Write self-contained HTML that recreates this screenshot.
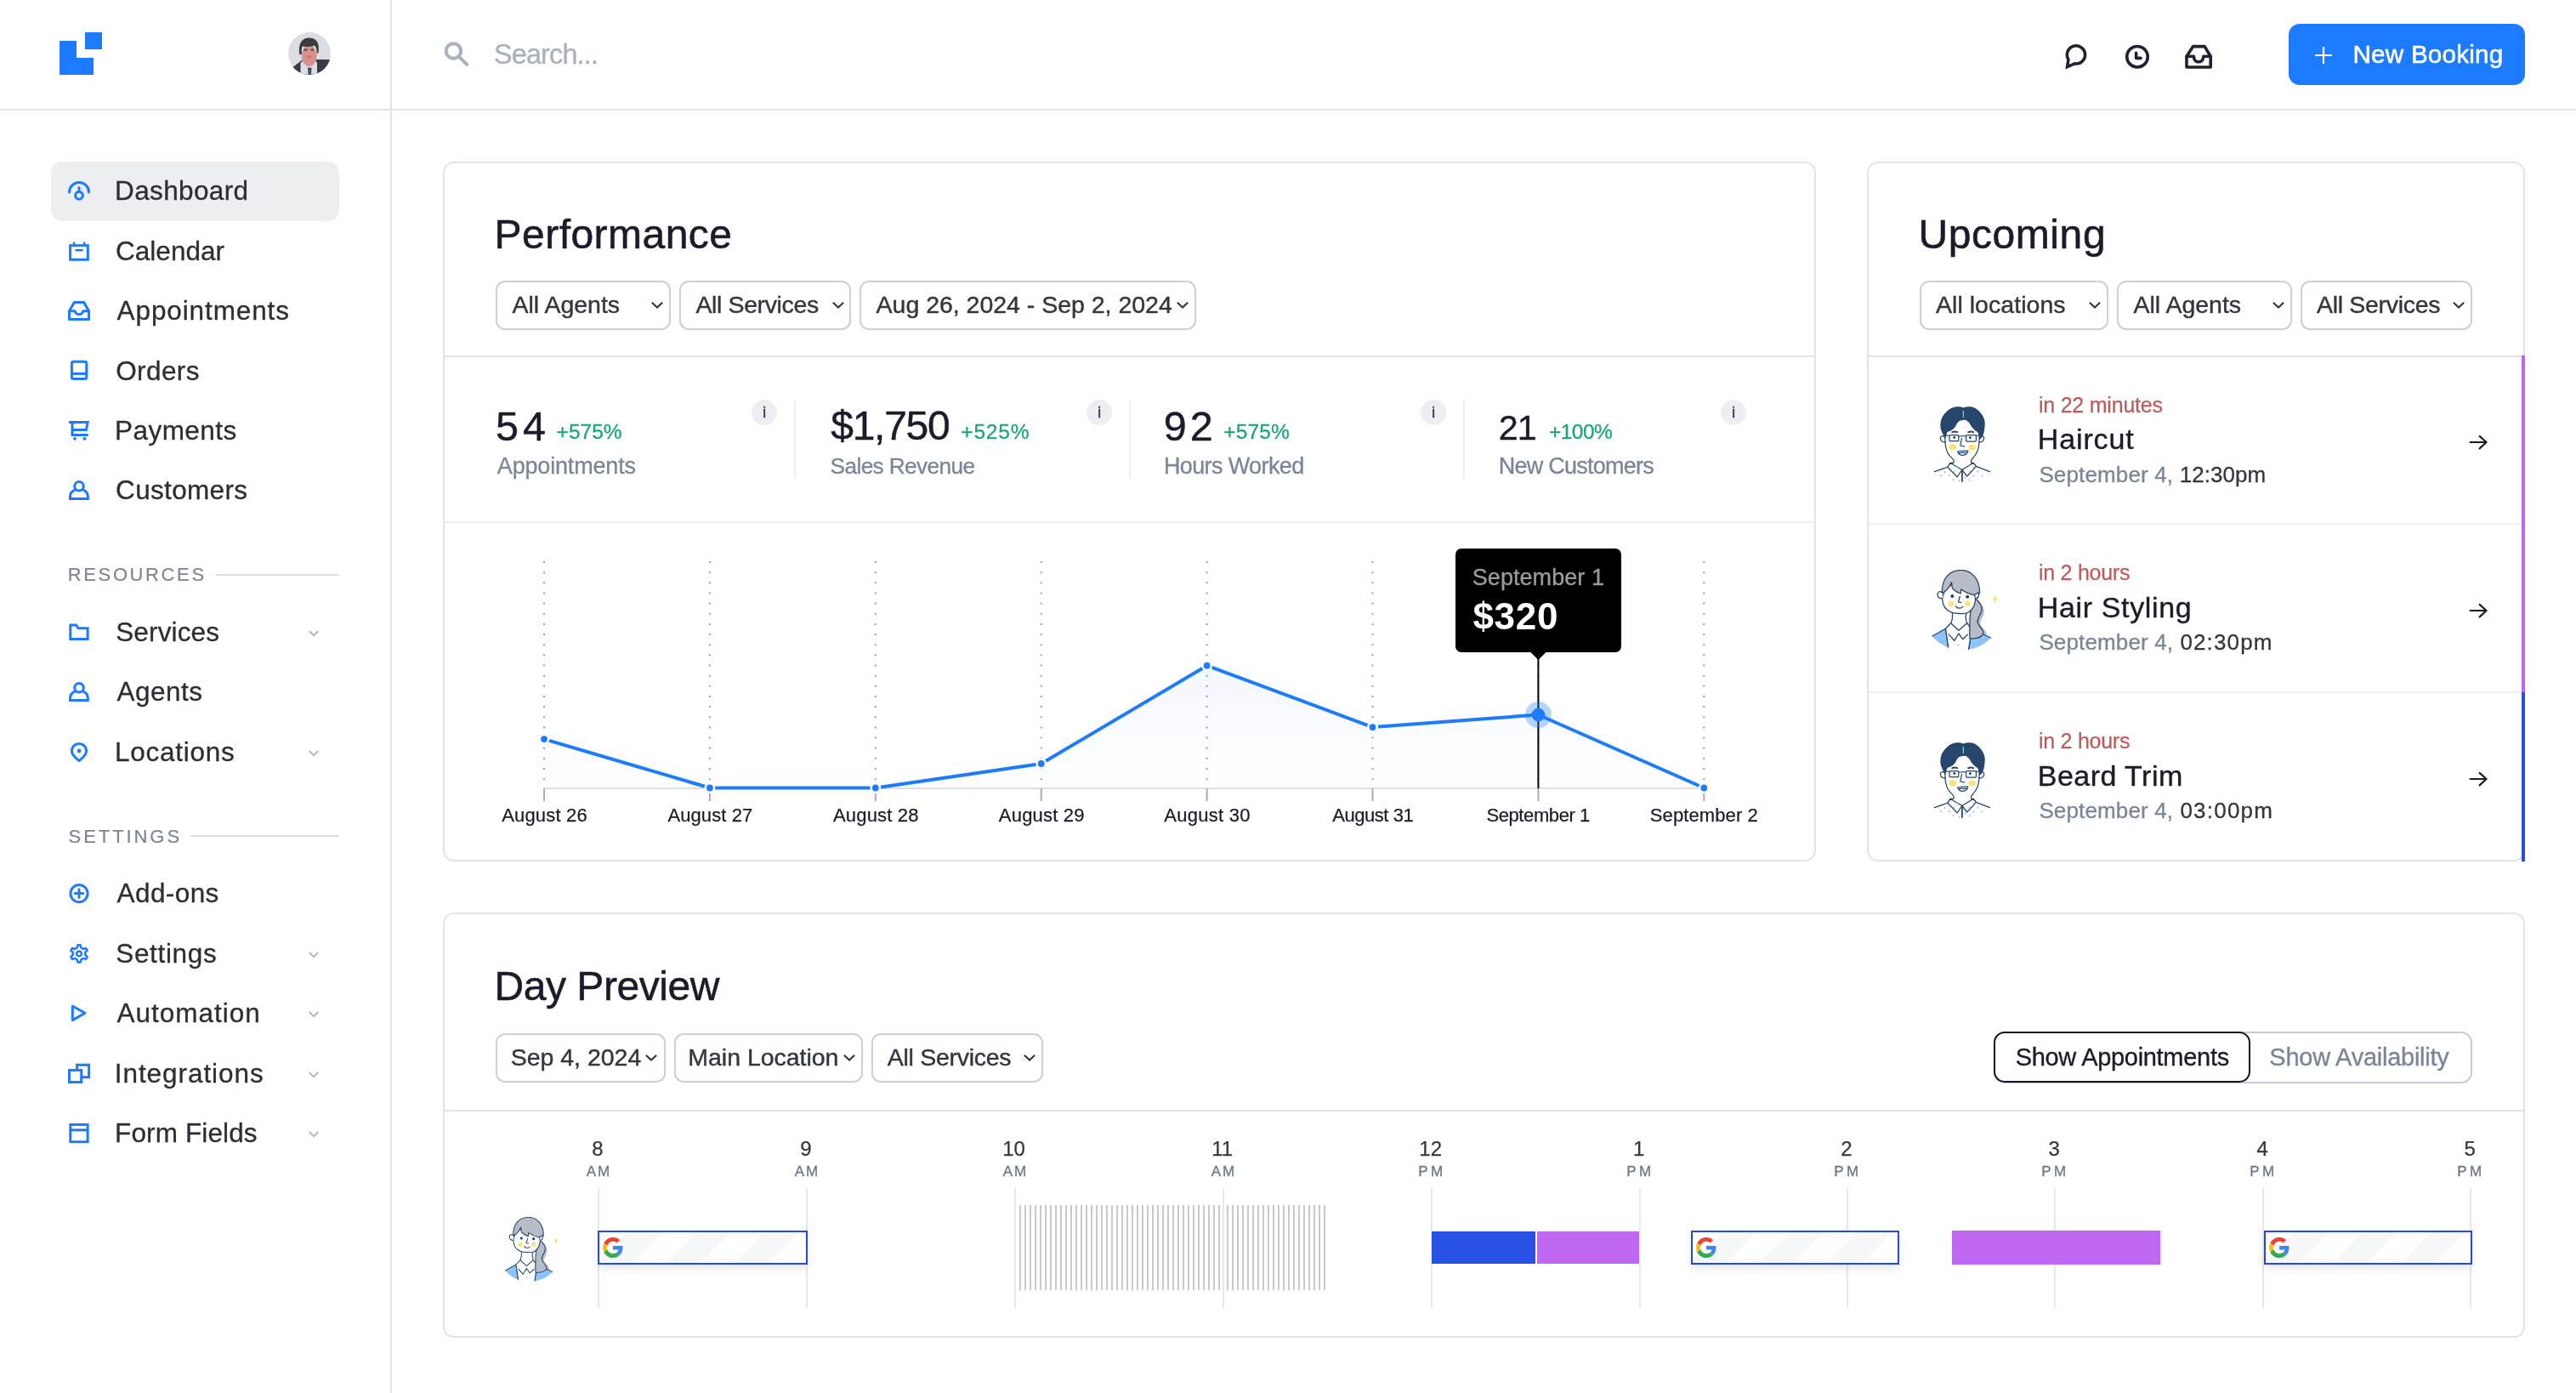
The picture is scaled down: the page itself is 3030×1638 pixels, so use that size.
<!DOCTYPE html>
<html lang="en"><head><meta charset="utf-8"><title>Dashboard</title>
<style>
html,body{margin:0;padding:0;background:#fff}
body{width:3030px;height:1638px;position:relative;overflow:hidden;font-family:"Liberation Sans",sans-serif}
#root{position:absolute;left:0;top:0;width:3030px;height:1638px;will-change:transform}
.b{position:absolute;display:block}
.t{position:absolute;white-space:nowrap;font-kerning:normal}
.card{border:2px solid #e2e4e8;border-radius:13px;background:#fff}
.sel{border:2px solid #cdd0d6;border-radius:11px;background:#fff;box-shadow:0 1px 2px rgba(0,0,0,0.04)}
.gev{border:2px solid #2449e2;background:repeating-linear-gradient(135deg,#fff 0,#fff 24.5px,#f6f7f9 24.5px,#f6f7f9 52.8px,#fff 52.8px,#fff 56.57px);box-shadow:0 5px 9px rgba(20,30,60,0.10)}
</style></head><body>
<div id="root">
<div class="b" style="left:459px;top:0;width:2px;height:1638px;background:#e2e4e8"></div>
<div class="b" style="left:0;top:128px;width:3030px;height:2px;background:#e2e4e8"></div>
<svg class="b" style="left:70px;top:38px" width="50" height="50" viewBox="0 0 50 50"><path fill="#1d7bff" d="M30 0H50V20H30ZM0 10H20V30H40V50H0Z"/></svg>
<svg class="b" style="left:339px;top:38px" width="50" height="50" viewBox="0 0 50 50"><defs><clipPath id="cpa"><circle cx="25" cy="25" r="25"/></clipPath></defs><g clip-path="url(#cpa)"><rect width="50" height="50" fill="#dcdde0"/>
<path d="M4 42 L16 33 L24 36 L33 32 L50 32 V50 H4Z" fill="#363b46"/>
<path d="M14.5 50 V36 L18 33 H32 L34 36 V50Z" fill="#d9dee7"/>
<path d="M23 41.5 H27.5 L27 50 H23.5Z" fill="#4b4b52"/>
<ellipse cx="24.6" cy="27.5" rx="8.9" ry="12.5" fill="#d98f8c"/>
<path d="M13.2 26 C11.5 12 17 6.6 24.5 6.6 C32.5 6.6 37.5 12 35.5 24 L33.8 25 C33.5 20 33 17.5 31 15.5 C26 17.5 20 17 16.5 16.5 C15.6 19 15.8 23 15.8 26Z" fill="#3c3c40"/>
<rect x="18.6" y="19.4" width="4" height="2.4" rx="1" fill="#4a4e55"/><rect x="26.2" y="19.4" width="4" height="2.4" rx="1" fill="#4a4e55"/>
<ellipse cx="24.8" cy="29" rx="2.6" ry="1.4" fill="#cf6f70"/>
</g></svg>
<div class="b" style="left:60px;top:190px;width:339px;height:70px;border-radius:13px;background:#eceef2"></div>
<div class="t" style="left:135.10px;top:209.33px;font-size:31.50px;line-height:31.50px;color:#2c2e34;letter-spacing:0.359px;-webkit-text-stroke:0.30px #2c2e34;">Dashboard</div>
<div class="t" style="left:136.10px;top:279.73px;font-size:31.50px;line-height:31.50px;color:#2c2e34;-webkit-text-stroke:0.30px #2c2e34;">Calendar</div>
<div class="t" style="left:137.60px;top:350.13px;font-size:31.50px;line-height:31.50px;color:#2c2e34;letter-spacing:0.891px;-webkit-text-stroke:0.30px #2c2e34;">Appointments</div>
<div class="t" style="left:136.22px;top:420.53px;font-size:31.50px;line-height:31.50px;color:#2c2e34;letter-spacing:0.390px;-webkit-text-stroke:0.30px #2c2e34;">Orders</div>
<div class="t" style="left:135.10px;top:490.93px;font-size:31.50px;line-height:31.50px;color:#2c2e34;letter-spacing:0.432px;-webkit-text-stroke:0.30px #2c2e34;">Payments</div>
<div class="t" style="left:136.10px;top:561.33px;font-size:31.50px;line-height:31.50px;color:#2c2e34;letter-spacing:0.322px;-webkit-text-stroke:0.30px #2c2e34;">Customers</div>
<div class="t" style="left:136.22px;top:728.03px;font-size:31.50px;line-height:31.50px;color:#2c2e34;letter-spacing:0.136px;-webkit-text-stroke:0.30px #2c2e34;">Services</div>
<div class="t" style="left:137.60px;top:798.43px;font-size:31.50px;line-height:31.50px;color:#2c2e34;letter-spacing:0.460px;-webkit-text-stroke:0.30px #2c2e34;">Agents</div>
<div class="t" style="left:135.10px;top:868.83px;font-size:31.50px;line-height:31.50px;color:#2c2e34;letter-spacing:0.731px;-webkit-text-stroke:0.30px #2c2e34;">Locations</div>
<div class="t" style="left:137.60px;top:1035.33px;font-size:31.50px;line-height:31.50px;color:#2c2e34;letter-spacing:0.408px;-webkit-text-stroke:0.30px #2c2e34;">Add-ons</div>
<div class="t" style="left:136.22px;top:1105.73px;font-size:31.50px;line-height:31.50px;color:#2c2e34;letter-spacing:0.661px;-webkit-text-stroke:0.30px #2c2e34;">Settings</div>
<div class="t" style="left:137.60px;top:1176.13px;font-size:31.50px;line-height:31.50px;color:#2c2e34;letter-spacing:0.981px;-webkit-text-stroke:0.30px #2c2e34;">Automation</div>
<div class="t" style="left:134.72px;top:1246.53px;font-size:31.50px;line-height:31.50px;color:#2c2e34;letter-spacing:0.943px;-webkit-text-stroke:0.30px #2c2e34;">Integrations</div>
<div class="t" style="left:135.10px;top:1316.93px;font-size:31.50px;line-height:31.50px;color:#2c2e34;letter-spacing:0.118px;-webkit-text-stroke:0.30px #2c2e34;">Form Fields</div>
<div class="t" style="left:79.85px;top:665.17px;font-size:22.00px;line-height:22.00px;color:#7d8593;letter-spacing:2.606px;-webkit-text-stroke:0.20px #7d8593;">RESOURCES</div>
<div class="t" style="left:80.60px;top:972.87px;font-size:22.00px;line-height:22.00px;color:#7d8593;letter-spacing:2.925px;-webkit-text-stroke:0.20px #7d8593;">SETTINGS</div>
<div class="b" style="left:254px;top:675px;width:145px;height:2px;background:#d9dce1"></div>
<div class="b" style="left:224px;top:982px;width:175px;height:2px;background:#d9dce1"></div>
<svg class="b" style="left:361px;top:739.2px" width="16" height="12" viewBox="0 0 16 12"><path d="M2.8 3 L8 8.2 L13.2 3" fill="none" stroke="#b3b7bd" stroke-width="2"/></svg>
<svg class="b" style="left:361px;top:880.0px" width="16" height="12" viewBox="0 0 16 12"><path d="M2.8 3 L8 8.2 L13.2 3" fill="none" stroke="#b3b7bd" stroke-width="2"/></svg>
<svg class="b" style="left:361px;top:1116.9px" width="16" height="12" viewBox="0 0 16 12"><path d="M2.8 3 L8 8.2 L13.2 3" fill="none" stroke="#b3b7bd" stroke-width="2"/></svg>
<svg class="b" style="left:361px;top:1187.3px" width="16" height="12" viewBox="0 0 16 12"><path d="M2.8 3 L8 8.2 L13.2 3" fill="none" stroke="#b3b7bd" stroke-width="2"/></svg>
<svg class="b" style="left:361px;top:1257.7px" width="16" height="12" viewBox="0 0 16 12"><path d="M2.8 3 L8 8.2 L13.2 3" fill="none" stroke="#b3b7bd" stroke-width="2"/></svg>
<svg class="b" style="left:361px;top:1328.1px" width="16" height="12" viewBox="0 0 16 12"><path d="M2.8 3 L8 8.2 L13.2 3" fill="none" stroke="#b3b7bd" stroke-width="2"/></svg>
<svg class="b" style="left:78px;top:210px" width="30" height="30" viewBox="0 0 30 30" fill="none" stroke="#1d7bff" stroke-width="3" stroke-linecap="round" stroke-linejoin="round"><path d="M3.5 16 A11.5 11.5 0 0 1 26.5 16"/><circle cx="15" cy="19.8" r="4.4"/><path d="M15 10.6 V15.4"/></svg>
<svg class="b" style="left:78px;top:281px" width="30" height="30" viewBox="0 0 30 30" fill="none" stroke="#1d7bff" stroke-width="3" stroke-linecap="round" stroke-linejoin="round"><rect x="4.6" y="7.7" width="20.7" height="16.6" stroke-linejoin="miter"/><path d="M9.1 3.6 V7.5 M21.2 3.6 V7.5 M10.5 13.2 H19.6" stroke-linecap="butt" stroke-width="2.5"/></svg>
<svg class="b" style="left:78px;top:352px" width="30" height="30" viewBox="0 0 30 30" fill="none" stroke="#1d7bff" stroke-width="3" stroke-linecap="round" stroke-linejoin="round"><path d="M3.5 13.8 L9.3 3.5 H20.7 L26.5 13.8 V23.4 H3.5 Z" stroke-linejoin="round"/><path d="M3.5 13.8 H10.2 A4.9 4.9 0 0 0 19.8 13.8 H26.5"/></svg>
<svg class="b" style="left:78px;top:422px" width="30" height="30" viewBox="0 0 30 30" fill="none" stroke="#1d7bff" stroke-width="3" stroke-linecap="round" stroke-linejoin="round"><rect x="6.4" y="3.3" width="17.4" height="20.2" rx="2"/><path d="M6.4 17.4 H23.8" stroke-linecap="butt"/></svg>
<svg class="b" style="left:78px;top:493px" width="30" height="30" viewBox="0 0 30 30" fill="none" stroke="#1d7bff" stroke-width="3" stroke-linecap="round" stroke-linejoin="round"><path d="M4.2 3.5 H25.2 L23.4 12.5 H7.5 M7 3.5 V18.5 H24.6" stroke-linejoin="miter"/><circle cx="10" cy="22.8" r="1.9" fill="#1d7bff" stroke="none"/><circle cx="21.5" cy="22.8" r="1.9" fill="#1d7bff" stroke="none"/></svg>
<svg class="b" style="left:78px;top:563px" width="30" height="30" viewBox="0 0 30 30" fill="none" stroke="#1d7bff" stroke-width="3" stroke-linecap="round" stroke-linejoin="round"><circle cx="15" cy="8.8" r="5.3"/><path d="M9.6 13.4 C6.3 14.8 4.5 17.6 4.5 21 V23.5 H25.3 V21 C25.3 17.6 23.6 14.8 20.4 13.4" stroke-linejoin="miter"/></svg>
<svg class="b" style="left:78px;top:800px" width="30" height="30" viewBox="0 0 30 30" fill="none" stroke="#1d7bff" stroke-width="3" stroke-linecap="round" stroke-linejoin="round"><circle cx="15" cy="8.8" r="5.3"/><path d="M9.6 13.4 C6.3 14.8 4.5 17.6 4.5 21 V23.5 H25.3 V21 C25.3 17.6 23.6 14.8 20.4 13.4" stroke-linejoin="miter"/></svg>
<svg class="b" style="left:78px;top:731px" width="30" height="30" viewBox="0 0 30 30" fill="none" stroke="#1d7bff" stroke-width="3" stroke-linecap="round" stroke-linejoin="round"><path d="M4.8 3.9 H11.5 L14 7.7 H25.1 V20.6 H4.8 Z" stroke-linejoin="miter"/></svg>
<svg class="b" style="left:78px;top:871px" width="30" height="30" viewBox="0 0 30 30" fill="none" stroke="#1d7bff" stroke-width="3" stroke-linecap="round" stroke-linejoin="round"><path d="M15 23.6 C15 23.6 6.4 17 6.4 12 A8.6 8.6 0 1 1 23.6 12 C23.6 17 15 23.6 15 23.6 Z"/><circle cx="15" cy="12" r="2.4" fill="#1d7bff" stroke="none"/></svg>
<svg class="b" style="left:78px;top:1037px" width="30" height="30" viewBox="0 0 30 30" fill="none" stroke="#1d7bff" stroke-width="3" stroke-linecap="round" stroke-linejoin="round"><circle cx="15" cy="13.6" r="10.1"/><path d="M10.2 13.6 H19.8 M15 8.8 V18.4"/></svg>
<svg class="b" style="left:78px;top:1108px" width="30" height="30" viewBox="0 0 30 30" fill="none" stroke="#1d7bff" stroke-width="3" stroke-linecap="round" stroke-linejoin="round"><g stroke-width="2.5"><path d="M13.39 3.23 L16.61 3.23 L17.24 6.24 L20.08 7.88 L23.00 6.92 L24.62 9.71 L22.32 11.76 L22.32 15.04 L24.62 17.09 L23.00 19.88 L20.08 18.92 L17.24 20.56 L16.61 23.57 L13.39 23.57 L12.76 20.56 L9.92 18.92 L7.00 19.88 L5.38 17.09 L7.68 15.04 L7.68 11.76 L5.38 9.71 L7.00 6.92 L9.92 7.88 L12.76 6.24Z"/><circle cx="15" cy="13.4" r="2.9"/></g></svg>
<svg class="b" style="left:78px;top:1179px" width="30" height="30" viewBox="0 0 30 30" fill="none" stroke="#1d7bff" stroke-width="3" stroke-linecap="round" stroke-linejoin="round"><path d="M7.3 4 L22 12.3 L7.3 20.6 Z"/></svg>
<svg class="b" style="left:78px;top:1249px" width="30" height="30" viewBox="0 0 30 30" fill="none" stroke="#1d7bff" stroke-width="3" stroke-linecap="round" stroke-linejoin="round"><rect x="12.6" y="3.2" width="14" height="14.5" stroke-linejoin="miter"/><rect x="3.5" y="9.4" width="14.2" height="14.1" fill="#fff" stroke-linejoin="miter"/></svg>
<svg class="b" style="left:78px;top:1319px" width="30" height="30" viewBox="0 0 30 30" fill="none" stroke="#1d7bff" stroke-width="3" stroke-linecap="round" stroke-linejoin="round"><rect x="4.8" y="3.4" width="20.3" height="20.3" stroke-linejoin="miter"/><path d="M4.8 9.8 H25.1" stroke-linecap="butt"/></svg>
<svg class="b" style="left:518px;top:44px" width="40" height="40" viewBox="0 0 40 40" fill="none" stroke="#aab2bd" stroke-width="4" stroke-linecap="round"><circle cx="15.4" cy="16" r="8.7"/><path d="M22 22.6 L31.2 31.8"/></svg>
<div class="t" style="left:581.02px;top:47.51px;font-size:32.34px;line-height:32.34px;color:#aab2bc;letter-spacing:-0.806px;-webkit-text-stroke:0.40px #aab2bc;">Search...</div>
<svg class="b" style="left:2420px;top:44px" width="200" height="44" viewBox="0 0 200 44" fill="none" stroke="#1f2230" stroke-width="3.6" stroke-linejoin="round" stroke-linecap="round"><path d="M12.9 25.9 L11.6 34.6 L20.3 30.9 A10.6 10.6 0 1 0 12.9 25.9 Z" stroke-linejoin="miter"/><circle cx="94" cy="22.7" r="12.25"/><path d="M92.6 18.2 V24.4 H98"/><path d="M152 22.2 L159.6 10.6 H173.2 L180.2 22.2 V35 H152 Z"/><path d="M152 22.2 H160.4 C160.4 31 171.8 31 171.8 22.2 H180.2"/></svg>
<div class="b" style="left:2692px;top:28px;width:278px;height:72px;border-radius:13px;background:#1d7bff"></div>
<svg class="b" style="left:2720px;top:52px" width="26" height="26" viewBox="0 0 26 26" stroke="#fff" stroke-width="2.2"><path d="M13 3 V23 M3 13 H23"/></svg>
<div class="t" style="left:2767.53px;top:49.24px;font-size:29.60px;line-height:29.60px;color:#fff;letter-spacing:0.235px;-webkit-text-stroke:0.55px #fff;">New Booking</div>
<div class="b card" style="left:521px;top:190px;width:1611px;height:819px"></div>
<div class="b card" style="left:2196px;top:190px;width:770px;height:819px"></div>
<div class="b card" style="left:521px;top:1073px;width:2445px;height:496px"></div>
<div class="b" style="left:523px;top:418px;width:1611px;height:2px;background:#e2e4e8"></div>
<div class="b" style="left:523px;top:613px;width:1611px;height:2px;background:#eeeff2"></div>
<div class="b" style="left:2198px;top:418px;width:770px;height:2px;background:#e2e4e8"></div>
<div class="b" style="left:2198px;top:615px;width:768px;height:2px;background:#eeeff2"></div>
<div class="b" style="left:2198px;top:813px;width:768px;height:2px;background:#eeeff2"></div>
<div class="b" style="left:523px;top:1305px;width:2445px;height:2px;background:#e2e4e8"></div>
<div class="t" style="left:581.52px;top:251.66px;font-size:48.00px;line-height:48.00px;color:#1a1c2a;letter-spacing:0.473px;-webkit-text-stroke:0.55px #1a1c2a;">Performance</div>
<div class="t" style="left:2256.38px;top:251.66px;font-size:48.00px;line-height:48.00px;color:#1a1c2a;letter-spacing:0.589px;-webkit-text-stroke:0.55px #1a1c2a;">Upcoming</div>
<div class="t" style="left:581.42px;top:1135.66px;font-size:48.00px;line-height:48.00px;color:#1a1c2a;letter-spacing:-0.435px;-webkit-text-stroke:0.55px #1a1c2a;">Day Preview</div>
<div class="b sel" style="left:583px;top:330px;width:202px;height:54px"></div>
<div class="t" style="left:602.50px;top:344.27px;font-size:28.50px;line-height:28.50px;color:#32373f;letter-spacing:-0.017px;-webkit-text-stroke:0.42px #32373f;">All Agents</div>
<svg class="b" style="left:764.3px;top:353.1px" width="18" height="12" viewBox="0 0 18 12"><path d="M2.9 2.8 L9 8.5 L15.1 2.8" fill="none" stroke="#32373f" stroke-width="2.2"/></svg>
<div class="b sel" style="left:799px;top:330px;width:198px;height:54px"></div>
<div class="t" style="left:818.40px;top:344.27px;font-size:28.50px;line-height:28.50px;color:#32373f;letter-spacing:-0.370px;-webkit-text-stroke:0.42px #32373f;">All Services</div>
<svg class="b" style="left:976.7px;top:353.1px" width="18" height="12" viewBox="0 0 18 12"><path d="M2.9 2.8 L9 8.5 L15.1 2.8" fill="none" stroke="#32373f" stroke-width="2.2"/></svg>
<div class="b sel" style="left:1011px;top:330px;width:392px;height:54px"></div>
<div class="t" style="left:1030.60px;top:344.27px;font-size:28.50px;line-height:28.50px;color:#32373f;letter-spacing:-0.019px;-webkit-text-stroke:0.42px #32373f;">Aug 26, 2024 - Sep 2, 2024</div>
<svg class="b" style="left:1381.7px;top:353.1px" width="18" height="12" viewBox="0 0 18 12"><path d="M2.9 2.8 L9 8.5 L15.1 2.8" fill="none" stroke="#32373f" stroke-width="2.2"/></svg>
<div class="b sel" style="left:2258px;top:330px;width:218px;height:54px"></div>
<div class="t" style="left:2277.00px;top:344.27px;font-size:28.50px;line-height:28.50px;color:#32373f;letter-spacing:0.040px;-webkit-text-stroke:0.42px #32373f;">All locations</div>
<svg class="b" style="left:2454.8px;top:353.1px" width="18" height="12" viewBox="0 0 18 12"><path d="M2.9 2.8 L9 8.5 L15.1 2.8" fill="none" stroke="#32373f" stroke-width="2.2"/></svg>
<div class="b sel" style="left:2490px;top:330px;width:202px;height:54px"></div>
<div class="t" style="left:2509.40px;top:344.27px;font-size:28.50px;line-height:28.50px;color:#32373f;letter-spacing:-0.006px;-webkit-text-stroke:0.42px #32373f;">All Agents</div>
<svg class="b" style="left:2670.8px;top:353.1px" width="18" height="12" viewBox="0 0 18 12"><path d="M2.9 2.8 L9 8.5 L15.1 2.8" fill="none" stroke="#32373f" stroke-width="2.2"/></svg>
<div class="b sel" style="left:2706px;top:330px;width:198px;height:54px"></div>
<div class="t" style="left:2725.00px;top:344.27px;font-size:28.50px;line-height:28.50px;color:#32373f;letter-spacing:-0.307px;-webkit-text-stroke:0.42px #32373f;">All Services</div>
<svg class="b" style="left:2882.8px;top:353.1px" width="18" height="12" viewBox="0 0 18 12"><path d="M2.9 2.8 L9 8.5 L15.1 2.8" fill="none" stroke="#32373f" stroke-width="2.2"/></svg>
<div class="b sel" style="left:583px;top:1215px;width:196px;height:54px"></div>
<div class="t" style="left:600.65px;top:1229.37px;font-size:28.50px;line-height:28.50px;color:#32373f;letter-spacing:-0.005px;-webkit-text-stroke:0.42px #32373f;">Sep 4, 2024</div>
<svg class="b" style="left:757.0px;top:1238.2px" width="18" height="12" viewBox="0 0 18 12"><path d="M2.9 2.8 L9 8.5 L15.1 2.8" fill="none" stroke="#32373f" stroke-width="2.2"/></svg>
<div class="b sel" style="left:793px;top:1215px;width:218px;height:54px"></div>
<div class="t" style="left:809.35px;top:1229.37px;font-size:28.50px;line-height:28.50px;color:#32373f;letter-spacing:-0.031px;-webkit-text-stroke:0.42px #32373f;">Main Location</div>
<svg class="b" style="left:990.0px;top:1238.2px" width="18" height="12" viewBox="0 0 18 12"><path d="M2.9 2.8 L9 8.5 L15.1 2.8" fill="none" stroke="#32373f" stroke-width="2.2"/></svg>
<div class="b sel" style="left:1025px;top:1215px;width:198px;height:54px"></div>
<div class="t" style="left:1043.80px;top:1229.37px;font-size:28.50px;line-height:28.50px;color:#32373f;letter-spacing:-0.289px;-webkit-text-stroke:0.42px #32373f;">All Services</div>
<svg class="b" style="left:1202.2px;top:1238.2px" width="18" height="12" viewBox="0 0 18 12"><path d="M2.9 2.8 L9 8.5 L15.1 2.8" fill="none" stroke="#32373f" stroke-width="2.2"/></svg>
<div class="t" style="left:582.92px;top:476.54px;font-size:48.50px;line-height:48.50px;color:#1a1c2a;letter-spacing:5.150px;-webkit-text-stroke:0.45px #1a1c2a;">54</div>
<div class="t" style="left:654.58px;top:496.26px;font-size:24.50px;line-height:24.50px;color:#1ca678;letter-spacing:0.025px;-webkit-text-stroke:0.30px #1ca678;">+575%</div>
<div class="t" style="left:584.80px;top:534.54px;font-size:27.00px;line-height:27.00px;color:#7b8597;letter-spacing:-0.168px;-webkit-text-stroke:0.30px #7b8597;">Appointments</div>
<div class="b" style="left:884px;top:470px;width:30px;height:30px;border-radius:15px;background:#eceef2"></div>
<div class="t" style="left:896.88px;top:475.41px;font-size:19.00px;line-height:19.00px;color:#32373f;-webkit-text-stroke:0.30px #32373f;">i</div>
<div class="t" style="left:977.20px;top:476.95px;font-size:48.02px;line-height:48.02px;color:#1a1c2a;letter-spacing:-1.260px;-webkit-text-stroke:0.45px #1a1c2a;">$1,750</div>
<div class="t" style="left:1130.28px;top:496.26px;font-size:24.50px;line-height:24.50px;color:#1ca678;letter-spacing:0.825px;-webkit-text-stroke:0.30px #1ca678;">+525%</div>
<div class="t" style="left:976.58px;top:535.22px;font-size:26.20px;line-height:26.20px;color:#7b8597;letter-spacing:-0.600px;-webkit-text-stroke:0.30px #7b8597;">Sales Revenue</div>
<div class="b" style="left:1278px;top:470px;width:30px;height:30px;border-radius:15px;background:#eceef2"></div>
<div class="t" style="left:1290.88px;top:475.41px;font-size:19.00px;line-height:19.00px;color:#32373f;-webkit-text-stroke:0.30px #32373f;">i</div>
<div class="t" style="left:1368.75px;top:476.54px;font-size:48.50px;line-height:48.50px;color:#1a1c2a;letter-spacing:4.125px;-webkit-text-stroke:0.45px #1a1c2a;">92</div>
<div class="t" style="left:1439.17px;top:496.26px;font-size:24.50px;line-height:24.50px;color:#1ca678;letter-spacing:0.175px;-webkit-text-stroke:0.30px #1ca678;">+575%</div>
<div class="t" style="left:1368.88px;top:534.54px;font-size:27.00px;line-height:27.00px;color:#7b8597;letter-spacing:-0.614px;-webkit-text-stroke:0.30px #7b8597;">Hours Worked</div>
<div class="b" style="left:1671px;top:470px;width:30px;height:30px;border-radius:15px;background:#eceef2"></div>
<div class="t" style="left:1683.88px;top:475.41px;font-size:19.00px;line-height:19.00px;color:#32373f;-webkit-text-stroke:0.30px #32373f;">i</div>
<div class="t" style="left:1762.80px;top:482.63px;font-size:41.30px;line-height:41.30px;color:#1a1c2a;letter-spacing:-1.000px;-webkit-text-stroke:0.45px #1a1c2a;">21</div>
<div class="t" style="left:1821.88px;top:496.26px;font-size:24.50px;line-height:24.50px;color:#1ca678;letter-spacing:-0.500px;-webkit-text-stroke:0.30px #1ca678;">+100%</div>
<div class="t" style="left:1762.67px;top:534.54px;font-size:27.00px;line-height:27.00px;color:#7b8597;letter-spacing:-0.750px;-webkit-text-stroke:0.30px #7b8597;">New Customers</div>
<div class="b" style="left:2024px;top:470px;width:30px;height:30px;border-radius:15px;background:#eceef2"></div>
<div class="t" style="left:2036.88px;top:475.41px;font-size:19.00px;line-height:19.00px;color:#32373f;-webkit-text-stroke:0.30px #32373f;">i</div>
<div class="b" style="left:934px;top:470px;width:2px;height:93px;background:#eeeff1"></div>
<div class="b" style="left:1328px;top:470px;width:2px;height:93px;background:#eeeff1"></div>
<div class="b" style="left:1721px;top:470px;width:2px;height:93px;background:#eeeff1"></div>
<svg class="b" style="left:521px;top:600px" width="1615" height="412" viewBox="0 0 1615 412"><defs><linearGradient id="ga" x1="0" y1="0" x2="0" y2="1"><stop offset="0" stop-color="#1d7bff" stop-opacity="0.055"/><stop offset="1" stop-color="#1d7bff" stop-opacity="0"/></linearGradient></defs><polygon points="119.0,269.1 313.9,326.5 508.8,326.5 703.7,298.0 898.6,182.7 1093.5,255.1 1288.4,240.5 1483.3,326.5 1483.3,327 119.0,327" fill="url(#ga)"/><rect x="119.0" y="326" width="1364.3" height="2" fill="#dedfe2"/><line x1="119.0" y1="60" x2="119.0" y2="326" stroke="#9b9fa6" stroke-width="2" stroke-dasharray="2 10.15"/><line x1="119.0" y1="327" x2="119.0" y2="342" stroke="#a9acb2" stroke-width="2"/><line x1="313.9" y1="60" x2="313.9" y2="326" stroke="#9b9fa6" stroke-width="2" stroke-dasharray="2 10.15"/><line x1="313.9" y1="327" x2="313.9" y2="342" stroke="#a9acb2" stroke-width="2"/><line x1="508.8" y1="60" x2="508.8" y2="326" stroke="#9b9fa6" stroke-width="2" stroke-dasharray="2 10.15"/><line x1="508.8" y1="327" x2="508.8" y2="342" stroke="#a9acb2" stroke-width="2"/><line x1="703.7" y1="60" x2="703.7" y2="326" stroke="#9b9fa6" stroke-width="2" stroke-dasharray="2 10.15"/><line x1="703.7" y1="327" x2="703.7" y2="342" stroke="#a9acb2" stroke-width="2"/><line x1="898.6" y1="60" x2="898.6" y2="326" stroke="#9b9fa6" stroke-width="2" stroke-dasharray="2 10.15"/><line x1="898.6" y1="327" x2="898.6" y2="342" stroke="#a9acb2" stroke-width="2"/><line x1="1093.5" y1="60" x2="1093.5" y2="326" stroke="#9b9fa6" stroke-width="2" stroke-dasharray="2 10.15"/><line x1="1093.5" y1="327" x2="1093.5" y2="342" stroke="#a9acb2" stroke-width="2"/><line x1="1288.4" y1="60" x2="1288.4" y2="326" stroke="#9b9fa6" stroke-width="2" stroke-dasharray="2 10.15"/><line x1="1288.4" y1="327" x2="1288.4" y2="342" stroke="#a9acb2" stroke-width="2"/><line x1="1483.3" y1="60" x2="1483.3" y2="326" stroke="#9b9fa6" stroke-width="2" stroke-dasharray="2 10.15"/><line x1="1483.3" y1="327" x2="1483.3" y2="342" stroke="#a9acb2" stroke-width="2"/><polyline points="119.0,269.1 313.9,326.5 508.8,326.5 703.7,298.0 898.6,182.7 1093.5,255.1 1288.4,240.5 1483.3,326.5" fill="none" stroke="#1d7bff" stroke-width="4" stroke-linejoin="round"/><circle cx="119.0" cy="269.1" r="5.2" fill="#1d7bff" stroke="#fff" stroke-width="2.6"/><circle cx="313.9" cy="326.5" r="5.2" fill="#1d7bff" stroke="#fff" stroke-width="2.6"/><circle cx="508.8" cy="326.5" r="5.2" fill="#1d7bff" stroke="#fff" stroke-width="2.6"/><circle cx="703.7" cy="298.0" r="5.2" fill="#1d7bff" stroke="#fff" stroke-width="2.6"/><circle cx="898.6" cy="182.7" r="5.2" fill="#1d7bff" stroke="#fff" stroke-width="2.6"/><circle cx="1093.5" cy="255.1" r="5.2" fill="#1d7bff" stroke="#fff" stroke-width="2.6"/><circle cx="1483.3" cy="326.5" r="5.2" fill="#1d7bff" stroke="#fff" stroke-width="2.6"/><rect x="1287.4" y="170" width="2" height="157" fill="#000"/><circle cx="1288.4" cy="240.5" r="15.5" fill="#1d7bff" fill-opacity="0.32"/><circle cx="1288.4" cy="240.5" r="7.8" fill="#1d7bff"/><rect x="1191" y="45" width="195" height="122" rx="7" fill="#000"/><path d="M1278.4 166 L1288.4 176 L1298.4 166Z" fill="#000"/></svg>
<div class="t" style="left:590.15px;top:948.37px;font-size:22.00px;line-height:22.00px;color:#1a1c2a;letter-spacing:0.181px;-webkit-text-stroke:0.25px #1a1c2a;">August 26</div>
<div class="t" style="left:785.40px;top:948.37px;font-size:22.00px;line-height:22.00px;color:#1a1c2a;letter-spacing:0.109px;-webkit-text-stroke:0.25px #1a1c2a;">August 27</div>
<div class="t" style="left:979.95px;top:948.37px;font-size:22.00px;line-height:22.00px;color:#1a1c2a;letter-spacing:0.181px;-webkit-text-stroke:0.25px #1a1c2a;">August 28</div>
<div class="t" style="left:1174.85px;top:948.37px;font-size:22.00px;line-height:22.00px;color:#1a1c2a;letter-spacing:0.197px;-webkit-text-stroke:0.25px #1a1c2a;">August 29</div>
<div class="t" style="left:1369.35px;top:948.37px;font-size:22.00px;line-height:22.00px;color:#1a1c2a;letter-spacing:0.266px;-webkit-text-stroke:0.25px #1a1c2a;">August 30</div>
<div class="t" style="left:1567.25px;top:948.37px;font-size:22.00px;line-height:22.00px;color:#1a1c2a;letter-spacing:-0.453px;-webkit-text-stroke:0.25px #1a1c2a;">August 31</div>
<div class="t" style="left:1748.40px;top:948.37px;font-size:22.00px;line-height:22.00px;color:#1a1c2a;letter-spacing:-0.400px;-webkit-text-stroke:0.25px #1a1c2a;">September 1</div>
<div class="t" style="left:1940.80px;top:948.37px;font-size:22.00px;line-height:22.00px;color:#1a1c2a;letter-spacing:0.100px;-webkit-text-stroke:0.25px #1a1c2a;">September 2</div>
<div class="t" style="left:1731.78px;top:666.14px;font-size:27.00px;line-height:27.00px;color:#9c9c9c;letter-spacing:0.055px;-webkit-text-stroke:0.30px #9c9c9c;">September 1</div>
<div class="t" style="left:1732.40px;top:703.25px;font-size:44.00px;line-height:44.00px;color:#fff;letter-spacing:0.725px;font-weight:700;">$320</div>
<svg width="0" height="0" style="position:absolute"><defs><clipPath id="cpm"><circle cx="48" cy="57" r="47.3"/></clipPath><clipPath id="cpw"><circle cx="48" cy="57" r="47.3"/></clipPath></defs></svg>
<svg class="b" style="left:2260.0px;top:465.0px" width="100.0" height="115.0" viewBox="0 0 100 115"><g clip-path="url(#cpm)"><g fill="none" stroke="#27466b" stroke-width="1.25" stroke-linecap="round" stroke-linejoin="round">
<path d="M27.6 49 C24.5 46.5 21.6 48 22.6 51.6 C23.4 54.5 26.2 55.5 28.4 54.6" fill="#fff"/>
<path d="M68.4 49 C71.5 46.5 74.4 48 73.4 51.6 C72.6 54.5 69.8 55.5 67.6 54.6" fill="#fff"/>
<path d="M28 46 C27.4 56 29 64 31.5 68.5 C33.5 72 36.5 73.6 37.6 75.5 C38.4 77 38.3 78.2 37.8 79.4 L33.9 79.3 L31 84.2 L15.3 89.6 M68 46 C68.6 56 67 63.5 65 67.5 C63 71.5 60.3 73.4 59.2 75.4 C58.5 76.8 58.4 78.2 58.9 79.4 L61.1 79.3 L64.4 83.4 L80.5 89.6" fill="none"/>
<path d="M33.9 79.3 L31 84.2 L42.1 95.8 L47.9 87.5 Z M61.1 79.3 L64.4 83.4 L53.7 95 L47.9 87.5 Z" fill="#fff"/>
<path d="M47.9 87.5 V101" stroke-width="1.8"/>
</g>
<path d="M28.5 51.2 C26 47 22 41 22.3 34.7 C22.6 29 24.5 24.5 27.3 21.5 C30.5 17.5 35 14.2 39.6 13.4 C43.5 12.8 47 13.2 49.5 14.6 C52 13.2 56 12.8 59.5 13.6 C64.5 14.8 68.5 18.5 71 22.3 C73.6 26 75 30 74.7 34 C74.5 39 73.8 43 72.7 46.2 C71.8 48.8 70 51 68.5 52 C68.3 48.5 67.5 45.5 66 43 C62.5 41.5 59.8 38 57.8 34.7 C56.5 32.3 54.8 30.3 52.8 29.3 C51.5 28.7 50 28.7 48.7 28.9 C46.8 29.2 45 29.6 43.8 30.6 C42 32.3 41 35 39.6 37.2 C37.5 40 34 42 30.6 43 C29.3 45.5 28.7 48.3 28.5 51.2 Z" fill="#27466b"/>
<path d="M49.3 18.5 V25.5" stroke="#e8edf3" stroke-width="0.9" stroke-linecap="round"/>
<ellipse cx="36.7" cy="60.7" rx="4.4" ry="3.6" fill="#fbe27e"/><ellipse cx="59.6" cy="61" rx="4.6" ry="3.6" fill="#fbe27e"/>
<g fill="none" stroke="#27466b" stroke-width="1.25" stroke-linecap="round" stroke-linejoin="round">
<path d="M36.3 43.2 C38 42.4 40.4 42.4 42.2 43.2 M55.2 43.2 C57 42.4 59.4 42.4 61.2 43.2" stroke-width="2"/>
<rect x="33" y="46.7" width="10.8" height="7" rx="1"/><rect x="52.6" y="46.7" width="11.8" height="7.4" rx="1"/>
<path d="M43.8 48 L52.6 47.6 M33 47.5 L29.3 46.8 M64.4 47.5 L67.2 46.8"/>
<path d="M47.5 50.4 L45.8 59 L50.8 59.8"/>
<path d="M42.5 66 C46.5 65.2 51 64.9 54.9 65.2 C54 68.5 51.5 70.3 48.7 70.3 C45.8 70.3 43.4 68.6 42.5 66 Z M43.8 67.6 L53.8 67.2" fill="#fff"/>
</g>
<circle cx="38.8" cy="49.2" r="1.5" fill="#27466b"/><circle cx="57.4" cy="49.6" r="1.5" fill="#27466b"/>
<g fill="#8db6f2"><circle cx="27.5" cy="90.0" r="0.9"/><circle cx="33.0" cy="94.0" r="0.9"/><circle cx="37.5" cy="99.0" r="0.9"/><circle cx="38.5" cy="89.5" r="0.9"/><circle cx="44.5" cy="100.5" r="0.9"/><circle cx="23.0" cy="94.0" r="0.9"/><circle cx="56.5" cy="99.5" r="0.9"/><circle cx="61.5" cy="94.5" r="0.9"/><circle cx="66.5" cy="89.5" r="0.9"/><circle cx="71.5" cy="94.5" r="0.9"/><circle cx="57.0" cy="89.5" r="0.9"/><circle cx="51.5" cy="97.0" r="0.9"/><circle cx="42.0" cy="84.5" r="0.9"/><circle cx="61.0" cy="84.5" r="0.9"/></g></g></svg>
<svg class="b" style="left:2260.0px;top:660.0px" width="100.0" height="115.0" viewBox="0 0 100 115"><g clip-path="url(#cpw)"><g stroke="#27466b" stroke-width="1.3" stroke-linecap="round" stroke-linejoin="round" fill="none">
<path d="M64 44 C70 48.5 74.5 54 73.8 60 C73 66 68.5 69.5 69.5 74 C70.5 78.5 76 80 76.5 85 C76.8 88.5 74 90.5 70 91.3 L62 90.5 Z" fill="#b7bcc5" stroke="none"/>
<path d="M11.6 88.8 L28.5 79.3 L33 110 L5 110 Z" fill="#8ec2fb"/>
<path d="M57.6 90.8 L54.5 110 L95 110 L81.8 90 L72 85.5 Z" fill="#8ec2fb"/>
<path d="M28.5 79.3 L34.7 72.7 L43.8 81.3 L53.7 72.7 L57.5 78 L57.6 90.8 L54.5 110 L33 110 Z" fill="#fff"/>
<path d="M32.2 85.9 L38.8 93.3 L43.8 85 L48.7 91.7 L54.5 85.9"/>
<path d="M36.3 60.3 C36.8 64 36.5 69 34.7 72.7 M52.8 61.1 C52 64 52 69 53.7 72.7" />
<path d="M63.2 43.5 C67.5 47 71.5 51.5 71 57.5 C70.5 63 65.5 66.5 66 71.5 C66.5 76.5 72.5 78.5 72.8 83.5 C73 87.5 69 90 62 90.8 C59.5 91 57.5 90.8 57 90.8 C56.5 84 57 76 57 70 C57 66 57.4 63 57.8 59.5 Z" fill="#b7bcc5"/>
<path d="M24.4 43 C25 50 26.5 54 29.5 56.5 C31.5 58.3 34.5 59.8 36.3 60.3 C40 61.5 49 62 52.8 61.1 C56 60 59.8 57 62 52 C63 49.5 63.6 46.5 63.6 43.8 L60 30 L30 28 Z" fill="#fff"/>
<path d="M24.6 36.5 C21.5 34.5 18.6 36 19 39.6 C19.4 42.8 22.3 44.4 24.9 43.4" fill="#fff"/>
<path d="M64.5 37.5 C66.5 36.6 68 38.2 67.4 40.5 C66.9 42.6 65 43.9 63.6 43.8" fill="#fff"/>
<path d="M24.3 37.5 C24.2 30 25.5 23.5 29.5 18.2 C33.5 13 39.5 10.3 46.2 10.3 C53 10.3 59 13.2 62.8 18.2 C66.8 23.5 68.8 31 68.5 37.5 L66 37.2 L62 39.6 C56.5 38.5 51 36 46.7 33 L46.2 38 C42 36.5 38.5 34.5 36.3 31.4 L35.5 24.8 C33.5 30 29.5 34.8 24.3 37.5 Z" fill="#b7bcc5"/>
<path d="M45.4 41.3 L43.4 47.9 L46.7 48.3"/>
<path d="M40.5 52.8 C42.5 55.8 46.7 55.8 48.7 53.3"/>
</g>
<circle cx="36.3" cy="40.9" r="2" fill="#27466b"/><circle cx="54.1" cy="41.7" r="2" fill="#27466b"/>
<circle cx="34.7" cy="50" r="3.3" fill="#fbe27e"/><circle cx="54.2" cy="49.6" r="3.3" fill="#fbe27e"/>
<circle cx="43.8" cy="98.5" r="0.6" fill="#27466b"/></g><path d="M86.7 38.6 C87.2 42 88 43.3 90.2 44.2 C88 45.1 87.2 46.4 86.7 49.8 C86.2 46.4 85.4 45.1 83.2 44.2 C85.4 43.3 86.2 42 86.7 38.6 Z" fill="#fbe27e"/></svg>
<svg class="b" style="left:2260.0px;top:860.4px" width="100.0" height="115.0" viewBox="0 0 100 115"><g clip-path="url(#cpm)"><g fill="none" stroke="#27466b" stroke-width="1.25" stroke-linecap="round" stroke-linejoin="round">
<path d="M27.6 49 C24.5 46.5 21.6 48 22.6 51.6 C23.4 54.5 26.2 55.5 28.4 54.6" fill="#fff"/>
<path d="M68.4 49 C71.5 46.5 74.4 48 73.4 51.6 C72.6 54.5 69.8 55.5 67.6 54.6" fill="#fff"/>
<path d="M28 46 C27.4 56 29 64 31.5 68.5 C33.5 72 36.5 73.6 37.6 75.5 C38.4 77 38.3 78.2 37.8 79.4 L33.9 79.3 L31 84.2 L15.3 89.6 M68 46 C68.6 56 67 63.5 65 67.5 C63 71.5 60.3 73.4 59.2 75.4 C58.5 76.8 58.4 78.2 58.9 79.4 L61.1 79.3 L64.4 83.4 L80.5 89.6" fill="none"/>
<path d="M33.9 79.3 L31 84.2 L42.1 95.8 L47.9 87.5 Z M61.1 79.3 L64.4 83.4 L53.7 95 L47.9 87.5 Z" fill="#fff"/>
<path d="M47.9 87.5 V101" stroke-width="1.8"/>
</g>
<path d="M28.5 51.2 C26 47 22 41 22.3 34.7 C22.6 29 24.5 24.5 27.3 21.5 C30.5 17.5 35 14.2 39.6 13.4 C43.5 12.8 47 13.2 49.5 14.6 C52 13.2 56 12.8 59.5 13.6 C64.5 14.8 68.5 18.5 71 22.3 C73.6 26 75 30 74.7 34 C74.5 39 73.8 43 72.7 46.2 C71.8 48.8 70 51 68.5 52 C68.3 48.5 67.5 45.5 66 43 C62.5 41.5 59.8 38 57.8 34.7 C56.5 32.3 54.8 30.3 52.8 29.3 C51.5 28.7 50 28.7 48.7 28.9 C46.8 29.2 45 29.6 43.8 30.6 C42 32.3 41 35 39.6 37.2 C37.5 40 34 42 30.6 43 C29.3 45.5 28.7 48.3 28.5 51.2 Z" fill="#27466b"/>
<path d="M49.3 18.5 V25.5" stroke="#e8edf3" stroke-width="0.9" stroke-linecap="round"/>
<ellipse cx="36.7" cy="60.7" rx="4.4" ry="3.6" fill="#fbe27e"/><ellipse cx="59.6" cy="61" rx="4.6" ry="3.6" fill="#fbe27e"/>
<g fill="none" stroke="#27466b" stroke-width="1.25" stroke-linecap="round" stroke-linejoin="round">
<path d="M36.3 43.2 C38 42.4 40.4 42.4 42.2 43.2 M55.2 43.2 C57 42.4 59.4 42.4 61.2 43.2" stroke-width="2"/>
<rect x="33" y="46.7" width="10.8" height="7" rx="1"/><rect x="52.6" y="46.7" width="11.8" height="7.4" rx="1"/>
<path d="M43.8 48 L52.6 47.6 M33 47.5 L29.3 46.8 M64.4 47.5 L67.2 46.8"/>
<path d="M47.5 50.4 L45.8 59 L50.8 59.8"/>
<path d="M42.5 66 C46.5 65.2 51 64.9 54.9 65.2 C54 68.5 51.5 70.3 48.7 70.3 C45.8 70.3 43.4 68.6 42.5 66 Z M43.8 67.6 L53.8 67.2" fill="#fff"/>
</g>
<circle cx="38.8" cy="49.2" r="1.5" fill="#27466b"/><circle cx="57.4" cy="49.6" r="1.5" fill="#27466b"/>
<g fill="#8db6f2"><circle cx="27.5" cy="90.0" r="0.9"/><circle cx="33.0" cy="94.0" r="0.9"/><circle cx="37.5" cy="99.0" r="0.9"/><circle cx="38.5" cy="89.5" r="0.9"/><circle cx="44.5" cy="100.5" r="0.9"/><circle cx="23.0" cy="94.0" r="0.9"/><circle cx="56.5" cy="99.5" r="0.9"/><circle cx="61.5" cy="94.5" r="0.9"/><circle cx="66.5" cy="89.5" r="0.9"/><circle cx="71.5" cy="94.5" r="0.9"/><circle cx="57.0" cy="89.5" r="0.9"/><circle cx="51.5" cy="97.0" r="0.9"/><circle cx="42.0" cy="84.5" r="0.9"/><circle cx="61.0" cy="84.5" r="0.9"/></g></g></svg>
<svg class="b" style="left:584.0px;top:1422.7px" width="80.7" height="92.8" viewBox="0 0 100 115"><g clip-path="url(#cpw)"><g stroke="#27466b" stroke-width="1.3" stroke-linecap="round" stroke-linejoin="round" fill="none">
<path d="M64 44 C70 48.5 74.5 54 73.8 60 C73 66 68.5 69.5 69.5 74 C70.5 78.5 76 80 76.5 85 C76.8 88.5 74 90.5 70 91.3 L62 90.5 Z" fill="#b7bcc5" stroke="none"/>
<path d="M11.6 88.8 L28.5 79.3 L33 110 L5 110 Z" fill="#8ec2fb"/>
<path d="M57.6 90.8 L54.5 110 L95 110 L81.8 90 L72 85.5 Z" fill="#8ec2fb"/>
<path d="M28.5 79.3 L34.7 72.7 L43.8 81.3 L53.7 72.7 L57.5 78 L57.6 90.8 L54.5 110 L33 110 Z" fill="#fff"/>
<path d="M32.2 85.9 L38.8 93.3 L43.8 85 L48.7 91.7 L54.5 85.9"/>
<path d="M36.3 60.3 C36.8 64 36.5 69 34.7 72.7 M52.8 61.1 C52 64 52 69 53.7 72.7" />
<path d="M63.2 43.5 C67.5 47 71.5 51.5 71 57.5 C70.5 63 65.5 66.5 66 71.5 C66.5 76.5 72.5 78.5 72.8 83.5 C73 87.5 69 90 62 90.8 C59.5 91 57.5 90.8 57 90.8 C56.5 84 57 76 57 70 C57 66 57.4 63 57.8 59.5 Z" fill="#b7bcc5"/>
<path d="M24.4 43 C25 50 26.5 54 29.5 56.5 C31.5 58.3 34.5 59.8 36.3 60.3 C40 61.5 49 62 52.8 61.1 C56 60 59.8 57 62 52 C63 49.5 63.6 46.5 63.6 43.8 L60 30 L30 28 Z" fill="#fff"/>
<path d="M24.6 36.5 C21.5 34.5 18.6 36 19 39.6 C19.4 42.8 22.3 44.4 24.9 43.4" fill="#fff"/>
<path d="M64.5 37.5 C66.5 36.6 68 38.2 67.4 40.5 C66.9 42.6 65 43.9 63.6 43.8" fill="#fff"/>
<path d="M24.3 37.5 C24.2 30 25.5 23.5 29.5 18.2 C33.5 13 39.5 10.3 46.2 10.3 C53 10.3 59 13.2 62.8 18.2 C66.8 23.5 68.8 31 68.5 37.5 L66 37.2 L62 39.6 C56.5 38.5 51 36 46.7 33 L46.2 38 C42 36.5 38.5 34.5 36.3 31.4 L35.5 24.8 C33.5 30 29.5 34.8 24.3 37.5 Z" fill="#b7bcc5"/>
<path d="M45.4 41.3 L43.4 47.9 L46.7 48.3"/>
<path d="M40.5 52.8 C42.5 55.8 46.7 55.8 48.7 53.3"/>
</g>
<circle cx="36.3" cy="40.9" r="2" fill="#27466b"/><circle cx="54.1" cy="41.7" r="2" fill="#27466b"/>
<circle cx="34.7" cy="50" r="3.3" fill="#fbe27e"/><circle cx="54.2" cy="49.6" r="3.3" fill="#fbe27e"/>
<circle cx="43.8" cy="98.5" r="0.6" fill="#27466b"/></g><path d="M86.7 38.6 C87.2 42 88 43.3 90.2 44.2 C88 45.1 87.2 46.4 86.7 49.8 C86.2 46.4 85.4 45.1 83.2 44.2 C85.4 43.3 86.2 42 86.7 38.6 Z" fill="#fbe27e"/></svg>
<div class="t" style="left:2397.88px;top:463.73px;font-size:25.00px;line-height:25.00px;color:#bf5b5b;letter-spacing:-0.213px;-webkit-text-stroke:0.25px #bf5b5b;">in 22 minutes</div>
<div class="t" style="left:2396.75px;top:499.21px;font-size:34.00px;line-height:34.00px;color:#1a1c2a;letter-spacing:0.875px;-webkit-text-stroke:0.40px #1a1c2a;">Haircut</div>
<div class="t" style="left:2398.38px;top:544.79px;font-size:26.00px;line-height:26.00px;color:#7b8597;letter-spacing:0.141px;-webkit-text-stroke:0.30px #7b8597;">September 4,</div>
<div class="t" style="left:2563.82px;top:544.79px;font-size:26.00px;line-height:26.00px;color:#32373f;letter-spacing:0.029px;-webkit-text-stroke:0.30px #32373f;">12:30pm</div>
<svg class="b" style="left:2902px;top:510.1px" width="26" height="20" viewBox="0 0 26 20" fill="none" stroke="#1a1c2a" stroke-width="2.2" stroke-linecap="round" stroke-linejoin="round"><path d="M3.6 10 H22.3 M14.6 2.9 L22.6 10 L14.6 17.4"/></svg>
<div class="t" style="left:2397.88px;top:661.43px;font-size:25.00px;line-height:25.00px;color:#bf5b5b;letter-spacing:-0.250px;-webkit-text-stroke:0.25px #bf5b5b;">in 2 hours</div>
<div class="t" style="left:2396.75px;top:696.91px;font-size:34.00px;line-height:34.00px;color:#1a1c2a;letter-spacing:0.648px;-webkit-text-stroke:0.40px #1a1c2a;">Hair Styling</div>
<div class="t" style="left:2398.38px;top:742.49px;font-size:26.00px;line-height:26.00px;color:#7b8597;letter-spacing:0.141px;-webkit-text-stroke:0.30px #7b8597;">September 4,</div>
<div class="t" style="left:2564.40px;top:742.49px;font-size:26.00px;line-height:26.00px;color:#32373f;letter-spacing:1.150px;-webkit-text-stroke:0.30px #32373f;">02:30pm</div>
<svg class="b" style="left:2902px;top:707.8px" width="26" height="20" viewBox="0 0 26 20" fill="none" stroke="#1a1c2a" stroke-width="2.2" stroke-linecap="round" stroke-linejoin="round"><path d="M3.6 10 H22.3 M14.6 2.9 L22.6 10 L14.6 17.4"/></svg>
<div class="t" style="left:2397.88px;top:859.13px;font-size:25.00px;line-height:25.00px;color:#bf5b5b;letter-spacing:-0.250px;-webkit-text-stroke:0.25px #bf5b5b;">in 2 hours</div>
<div class="t" style="left:2396.75px;top:894.61px;font-size:34.00px;line-height:34.00px;color:#1a1c2a;letter-spacing:0.469px;-webkit-text-stroke:0.40px #1a1c2a;">Beard Trim</div>
<div class="t" style="left:2398.38px;top:940.19px;font-size:26.00px;line-height:26.00px;color:#7b8597;letter-spacing:0.141px;-webkit-text-stroke:0.30px #7b8597;">September 4,</div>
<div class="t" style="left:2564.40px;top:940.19px;font-size:26.00px;line-height:26.00px;color:#32373f;letter-spacing:1.233px;-webkit-text-stroke:0.30px #32373f;">03:00pm</div>
<svg class="b" style="left:2902px;top:905.5px" width="26" height="20" viewBox="0 0 26 20" fill="none" stroke="#1a1c2a" stroke-width="2.2" stroke-linecap="round" stroke-linejoin="round"><path d="M3.6 10 H22.3 M14.6 2.9 L22.6 10 L14.6 17.4"/></svg>
<div class="b" style="left:2966px;top:418px;width:4px;height:396px;background:#c065f3"></div>
<div class="b" style="left:2966px;top:814px;width:4px;height:199px;background:#2550e4"></div>
<div class="b" style="left:2345px;top:1213px;width:559px;height:57px;border:2px solid #c5ccd6;border-radius:13px"></div>
<div class="b" style="left:2345px;top:1213px;width:298.2px;height:56.2px;border:2.4px solid #14151f;border-radius:13px;background:#fff"></div>
<div class="t" style="left:2370.65px;top:1228.65px;font-size:29.00px;line-height:29.00px;color:#1a1c2a;letter-spacing:-0.302px;-webkit-text-stroke:0.35px #1a1c2a;">Show Appointments</div>
<div class="t" style="left:2669.35px;top:1228.65px;font-size:29.00px;line-height:29.00px;color:#7b8597;letter-spacing:-0.253px;-webkit-text-stroke:0.35px #7b8597;">Show Availability</div>
<div class="b" style="left:703.0px;top:1397px;width:2px;height:141px;background:#e6e8ed"></div>
<div class="t" style="left:696.31px;top:1339.08px;font-size:24.00px;line-height:24.00px;color:#32373f;-webkit-text-stroke:0.25px #32373f;">8</div>
<div class="t" style="left:689.65px;top:1368.61px;font-size:17.00px;line-height:17.00px;color:#6d7789;letter-spacing:2.050px;-webkit-text-stroke:0.30px #6d7789;">AM</div>
<div class="b" style="left:948.0px;top:1397px;width:2px;height:141px;background:#e6e8ed"></div>
<div class="t" style="left:941.31px;top:1339.08px;font-size:24.00px;line-height:24.00px;color:#32373f;-webkit-text-stroke:0.25px #32373f;">9</div>
<div class="t" style="left:934.65px;top:1368.61px;font-size:17.00px;line-height:17.00px;color:#6d7789;letter-spacing:2.050px;-webkit-text-stroke:0.30px #6d7789;">AM</div>
<div class="b" style="left:1193.0px;top:1397px;width:2px;height:141px;background:#e6e8ed"></div>
<div class="t" style="left:1179.19px;top:1339.08px;font-size:24.00px;line-height:24.00px;color:#32373f;-webkit-text-stroke:0.25px #32373f;">10</div>
<div class="t" style="left:1179.65px;top:1368.61px;font-size:17.00px;line-height:17.00px;color:#6d7789;letter-spacing:2.050px;-webkit-text-stroke:0.30px #6d7789;">AM</div>
<div class="b" style="left:1438.0px;top:1397px;width:2px;height:141px;background:#e6e8ed"></div>
<div class="t" style="left:1425.19px;top:1339.08px;font-size:24.00px;line-height:24.00px;color:#32373f;-webkit-text-stroke:0.25px #32373f;">11</div>
<div class="t" style="left:1424.65px;top:1368.61px;font-size:17.00px;line-height:17.00px;color:#6d7789;letter-spacing:2.050px;-webkit-text-stroke:0.30px #6d7789;">AM</div>
<div class="b" style="left:1683.0px;top:1397px;width:2px;height:141px;background:#e6e8ed"></div>
<div class="t" style="left:1669.31px;top:1339.08px;font-size:24.00px;line-height:24.00px;color:#32373f;-webkit-text-stroke:0.25px #32373f;">12</div>
<div class="t" style="left:1668.27px;top:1368.61px;font-size:17.00px;line-height:17.00px;color:#6d7789;letter-spacing:3.425px;-webkit-text-stroke:0.30px #6d7789;">PM</div>
<div class="b" style="left:1928.0px;top:1397px;width:2px;height:141px;background:#e6e8ed"></div>
<div class="t" style="left:1921.00px;top:1339.08px;font-size:24.00px;line-height:24.00px;color:#32373f;-webkit-text-stroke:0.25px #32373f;">1</div>
<div class="t" style="left:1913.27px;top:1368.61px;font-size:17.00px;line-height:17.00px;color:#6d7789;letter-spacing:3.425px;-webkit-text-stroke:0.30px #6d7789;">PM</div>
<div class="b" style="left:2172.0px;top:1397px;width:2px;height:141px;background:#e6e8ed"></div>
<div class="t" style="left:2165.31px;top:1339.08px;font-size:24.00px;line-height:24.00px;color:#32373f;-webkit-text-stroke:0.25px #32373f;">2</div>
<div class="t" style="left:2157.28px;top:1368.61px;font-size:17.00px;line-height:17.00px;color:#6d7789;letter-spacing:3.425px;-webkit-text-stroke:0.30px #6d7789;">PM</div>
<div class="b" style="left:2416.0px;top:1397px;width:2px;height:141px;background:#e6e8ed"></div>
<div class="t" style="left:2409.38px;top:1339.08px;font-size:24.00px;line-height:24.00px;color:#32373f;-webkit-text-stroke:0.25px #32373f;">3</div>
<div class="t" style="left:2401.28px;top:1368.61px;font-size:17.00px;line-height:17.00px;color:#6d7789;letter-spacing:3.425px;-webkit-text-stroke:0.30px #6d7789;">PM</div>
<div class="b" style="left:2661.0px;top:1397px;width:2px;height:141px;background:#e6e8ed"></div>
<div class="t" style="left:2654.38px;top:1339.08px;font-size:24.00px;line-height:24.00px;color:#32373f;-webkit-text-stroke:0.25px #32373f;">4</div>
<div class="t" style="left:2646.28px;top:1368.61px;font-size:17.00px;line-height:17.00px;color:#6d7789;letter-spacing:3.425px;-webkit-text-stroke:0.30px #6d7789;">PM</div>
<div class="b" style="left:2905.0px;top:1397px;width:2px;height:141px;background:#e6e8ed"></div>
<div class="t" style="left:2898.38px;top:1339.08px;font-size:24.00px;line-height:24.00px;color:#32373f;-webkit-text-stroke:0.25px #32373f;">5</div>
<div class="t" style="left:2890.28px;top:1368.61px;font-size:17.00px;line-height:17.00px;color:#6d7789;letter-spacing:3.425px;-webkit-text-stroke:0.30px #6d7789;">PM</div>
<div class="b" style="left:1199px;top:1417px;width:236px;height:100px;background:repeating-linear-gradient(90deg,#c9c9c9 0,#c9c9c9 2px,transparent 2px,transparent 6px)"></div>
<div class="b" style="left:1443px;top:1417px;width:116px;height:100px;background:repeating-linear-gradient(90deg,#c9c9c9 0,#c9c9c9 2px,transparent 2px,transparent 6px)"></div>
<div class="b" style="left:1684px;top:1448px;width:122px;height:38px;background:#2750e4"></div>
<div class="b" style="left:1808px;top:1448px;width:120px;height:38px;background:#c067f1"></div>
<div class="b" style="left:2296px;top:1447px;width:245px;height:40px;background:#c067f1"></div>
<div class="b gev" style="left:703px;top:1447px;width:243px;height:36px"></div>
<svg class="b" style="left:709.2px;top:1455px" width="24" height="24" viewBox="0 0 48 48"><path fill="#EA4335" d="M24 9.5c3.54 0 6.71 1.22 9.21 3.6l6.85-6.85C35.9 2.38 30.47 0 24 0 14.62 0 6.51 5.38 2.56 13.22l7.98 6.19C12.43 13.72 17.74 9.5 24 9.5z"/><path fill="#4285F4" d="M46.98 24.55c0-1.57-.15-3.09-.38-4.55H24v9.02h12.94c-.58 2.96-2.26 5.48-4.78 7.18l7.73 6c4.51-4.18 7.09-10.36 7.09-17.65z"/><path fill="#FBBC05" d="M10.53 28.59c-.48-1.45-.76-2.99-.76-4.59s.27-3.14.76-4.59l-7.98-6.19C.92 16.46 0 20.12 0 24c0 3.88.92 7.54 2.56 10.78l7.97-6.19z"/><path fill="#34A853" d="M24 48c6.48 0 11.93-2.13 15.89-5.81l-7.73-6c-2.15 1.45-4.92 2.3-8.16 2.3-6.26 0-11.57-4.22-13.47-9.91l-7.98 6.19C6.51 42.62 14.62 48 24 48z"/></svg>
<div class="b gev" style="left:1989px;top:1447px;width:241px;height:36px"></div>
<svg class="b" style="left:1995.2px;top:1455px" width="24" height="24" viewBox="0 0 48 48"><path fill="#EA4335" d="M24 9.5c3.54 0 6.71 1.22 9.21 3.6l6.85-6.85C35.9 2.38 30.47 0 24 0 14.62 0 6.51 5.38 2.56 13.22l7.98 6.19C12.43 13.72 17.74 9.5 24 9.5z"/><path fill="#4285F4" d="M46.98 24.55c0-1.57-.15-3.09-.38-4.55H24v9.02h12.94c-.58 2.96-2.26 5.48-4.78 7.18l7.73 6c4.51-4.18 7.09-10.36 7.09-17.65z"/><path fill="#FBBC05" d="M10.53 28.59c-.48-1.45-.76-2.99-.76-4.59s.27-3.14.76-4.59l-7.98-6.19C.92 16.46 0 20.12 0 24c0 3.88.92 7.54 2.56 10.78l7.97-6.19z"/><path fill="#34A853" d="M24 48c6.48 0 11.93-2.13 15.89-5.81l-7.73-6c-2.15 1.45-4.92 2.3-8.16 2.3-6.26 0-11.57-4.22-13.47-9.91l-7.98 6.19C6.51 42.62 14.62 48 24 48z"/></svg>
<div class="b gev" style="left:2663px;top:1447px;width:241px;height:36px"></div>
<svg class="b" style="left:2669.2px;top:1455px" width="24" height="24" viewBox="0 0 48 48"><path fill="#EA4335" d="M24 9.5c3.54 0 6.71 1.22 9.21 3.6l6.85-6.85C35.9 2.38 30.47 0 24 0 14.62 0 6.51 5.38 2.56 13.22l7.98 6.19C12.43 13.72 17.74 9.5 24 9.5z"/><path fill="#4285F4" d="M46.98 24.55c0-1.57-.15-3.09-.38-4.55H24v9.02h12.94c-.58 2.96-2.26 5.48-4.78 7.18l7.73 6c4.51-4.18 7.09-10.36 7.09-17.65z"/><path fill="#FBBC05" d="M10.53 28.59c-.48-1.45-.76-2.99-.76-4.59s.27-3.14.76-4.59l-7.98-6.19C.92 16.46 0 20.12 0 24c0 3.88.92 7.54 2.56 10.78l7.97-6.19z"/><path fill="#34A853" d="M24 48c6.48 0 11.93-2.13 15.89-5.81l-7.73-6c-2.15 1.45-4.92 2.3-8.16 2.3-6.26 0-11.57-4.22-13.47-9.91l-7.98 6.19C6.51 42.62 14.62 48 24 48z"/></svg>
</div>
</body></html>
